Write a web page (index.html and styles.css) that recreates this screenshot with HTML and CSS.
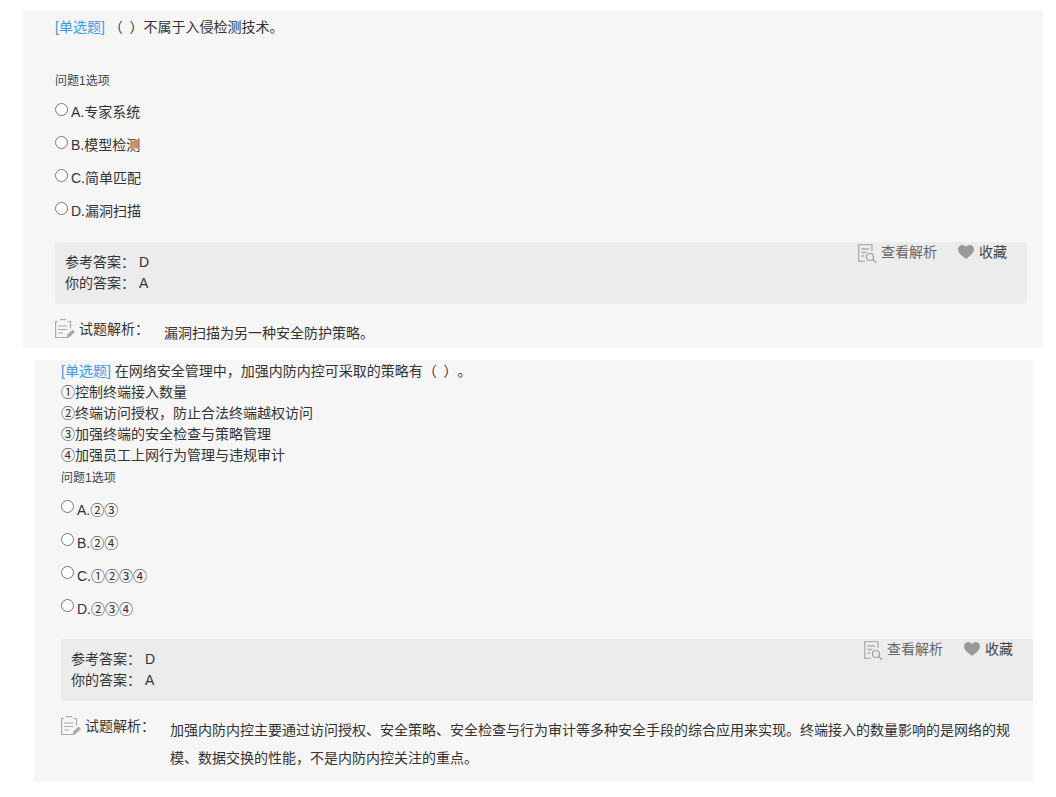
FILE: index.html
```html
<!DOCTYPE html>
<html lang="zh">
<head>
<meta charset="utf-8">
<title>试题</title>
<link rel="stylesheet" href="styles.css">
</head>
<body>
<svg class="defs" width="0" height="0">
  <symbol id="i-view" viewBox="0 0 19 19">
    <path d="M14 7V.7H.7v16.600H7" fill="none" stroke="#b0b0b0" stroke-width="1.300"/>
    <path d="M3.500 5h7.500M3.500 8.500h5M3.500 12h3" fill="none" stroke="#b0b0b0" stroke-width="1.300"/>
    <circle cx="12" cy="13" r="3.500" fill="none" stroke="#a0a0a0" stroke-width="1.200"/>
    <path d="M14.600 15.600l3.800 3.400" stroke="#a0a0a0" stroke-width="1.300"/>
  </symbol>
  <symbol id="i-heart" viewBox="0 0 16 14">
    <path d="M8 14C3 10.200 0 7.800 0 4.300 0 1.800 1.900 0 4.200 0 5.800 0 7.200.8 8 2.100 8.800.8 10.200 0 11.800 0 14.100 0 16 1.800 16 4.300 16 7.800 13 10.200 8 14z" fill="#999"/>
  </symbol>
  <symbol id="i-note" viewBox="0 0 20 19">
    <path d="M3 2.500H.6v16h12.400" fill="none" stroke="#aaa" stroke-width="1.200"/>
    <path d="M12.500 2.500h3v7" fill="none" stroke="#aaa" stroke-width="1.200"/>
    <path d="M5 .6h6" stroke="#aaa" stroke-width="1.200"/>
    <path d="M3 7h9.500M3 10.500h9.500M3 14h5" fill="none" stroke="#aaa" stroke-width="1.200"/>
    <path d="M11.500 18.700l1-3.500 5-4.700 2.500 2.500-5 4.700z" fill="#aaa"/>
  </symbol>
</svg>

<section class="panel panel-first">
  <div class="stem"><span class="tag">[单选题]</span> <span class="paren">（</span> ）不属于入侵检测技术。</div>
  <div class="opt-title opt-title-first">问题1选项</div>
  <label class="option"><input type="radio" name="q1"><span>A.专家系统</span></label>
  <label class="option"><input type="radio" name="q1"><span>B.模型检测</span></label>
  <label class="option"><input type="radio" name="q1"><span>C.简单匹配</span></label>
  <label class="option"><input type="radio" name="q1"><span>D.漏洞扫描</span></label>
  <div class="answer">
    <div class="answer-text">
      <div>参考答案：&nbsp;D</div>
      <div>你的答案：&nbsp;A</div>
    </div>
    <div class="actions">
      <span class="action"><svg class="ico-view"><use href="#i-view"/></svg>查看解析</span>
      <span class="action action-fav"><svg class="ico-heart"><use href="#i-heart"/></svg><span class="fav-text">收藏</span></span>
    </div>
  </div>
  <div class="analysis">
    <div class="analysis-label"><svg class="ico-note"><use href="#i-note"/></svg>试题解析：</div>
    <div class="analysis-body">漏洞扫描为另一种安全防护策略。</div>
  </div>
</section>

<section class="panel panel-second">
  <div class="stem"><span class="tag">[单选题]</span> 在网络安全管理中，加强内防内控可采取的策略有<span class="paren">（</span> ）。</div>
  <div class="stem">①控制终端接入数量</div>
  <div class="stem">②终端访问授权，防止合法终端越权访问</div>
  <div class="stem">③加强终端的安全检查与策略管理</div>
  <div class="stem">④加强员工上网行为管理与违规审计</div>
  <div class="opt-title">问题1选项</div>
  <label class="option"><input type="radio" name="q2"><span>A.②③</span></label>
  <label class="option"><input type="radio" name="q2"><span>B.②④</span></label>
  <label class="option"><input type="radio" name="q2"><span>C.①②③④</span></label>
  <label class="option"><input type="radio" name="q2"><span>D.②③④</span></label>
  <div class="answer">
    <div class="answer-text">
      <div>参考答案：&nbsp;D</div>
      <div>你的答案：&nbsp;A</div>
    </div>
    <div class="actions">
      <span class="action"><svg class="ico-view"><use href="#i-view"/></svg>查看解析</span>
      <span class="action action-fav"><svg class="ico-heart"><use href="#i-heart"/></svg><span class="fav-text">收藏</span></span>
    </div>
  </div>
  <div class="analysis">
    <div class="analysis-label"><svg class="ico-note"><use href="#i-note"/></svg>试题解析：</div>
    <div class="analysis-body analysis-long">加强内防内控主要通过访问授权、安全策略、安全检查与行为审计等多种安全手段的综合应用来实现。终端接入的数量影响的是网络的规模、数据交换的性能，不是内防内控关注的重点。</div>
  </div>
</section>
</body>
</html>
```

FILE: styles.css
```css
* { box-sizing: border-box; }
html, body { margin: 0; padding: 0; background: #fff; }
body {
  padding-top: 10px;
  font-family: "Liberation Sans", "Noto Sans CJK SC", sans-serif;
  font-size: 14px;
  line-height: 21px;
  color: #333;
  text-spacing-trim: space-all;
}
.defs { position: absolute; }
.panel { background: #f6f6f6; }
.panel-first { margin-left: 23px; width: 1020px; height: 338px; padding: 7px 16px 0 32px; }
.panel-second { margin: 12px 0 0 34px; width: 999px; height: 422px; padding: 1px 0 0 27px; }
.stem { height: 21px; }
.tag { color: #3a9bea; }
.paren { margin-right: 3px; }
.opt-title { font-size: 12px; height: 21px; padding-top: 2px; color: #444; }
.opt-title-first { margin-top: 31px; }
.option { display: flex; align-items: flex-start; height: 33px; }
.opt-title + .option { margin-top: 13px; }
.option input { width: 13px; height: 13px; margin: 0 3px 0 0; }
.option span { margin-top: -1px; }
.panel-second .option span { margin-top: 0; }
.answer {
  display: flex;
  justify-content: space-between;
  width: 972px;
  height: 62px;
  margin-top: 7px;
  padding: 0 20px 0 10px;
  background: #ececec;
  border-radius: 3px;
}
.answer-text { padding-top: 10px; }
.actions { display: flex; align-items: flex-start; color: #666; }
.action { display: flex; align-items: flex-start; height: 21px; }
.action-fav { margin-left: 21px; }
.fav-text { color: #444; }
.ico-view { width: 19px; height: 19px; margin: 2px 4px 0 0; }
.ico-heart { width: 16px; height: 14px; margin: 3px 5px 0 0; }
.ico-note { width: 20px; height: 19px; margin-right: 4px; flex: none; }
.analysis { display: flex; align-items: flex-start; margin-top: 15px; }
.analysis-label { display: flex; align-items: flex-start; width: 109px; flex: none; }
.analysis-body { padding-top: 4px; width: 848px; }
.analysis-long { line-height: 28px; padding-top: 0; }
```
